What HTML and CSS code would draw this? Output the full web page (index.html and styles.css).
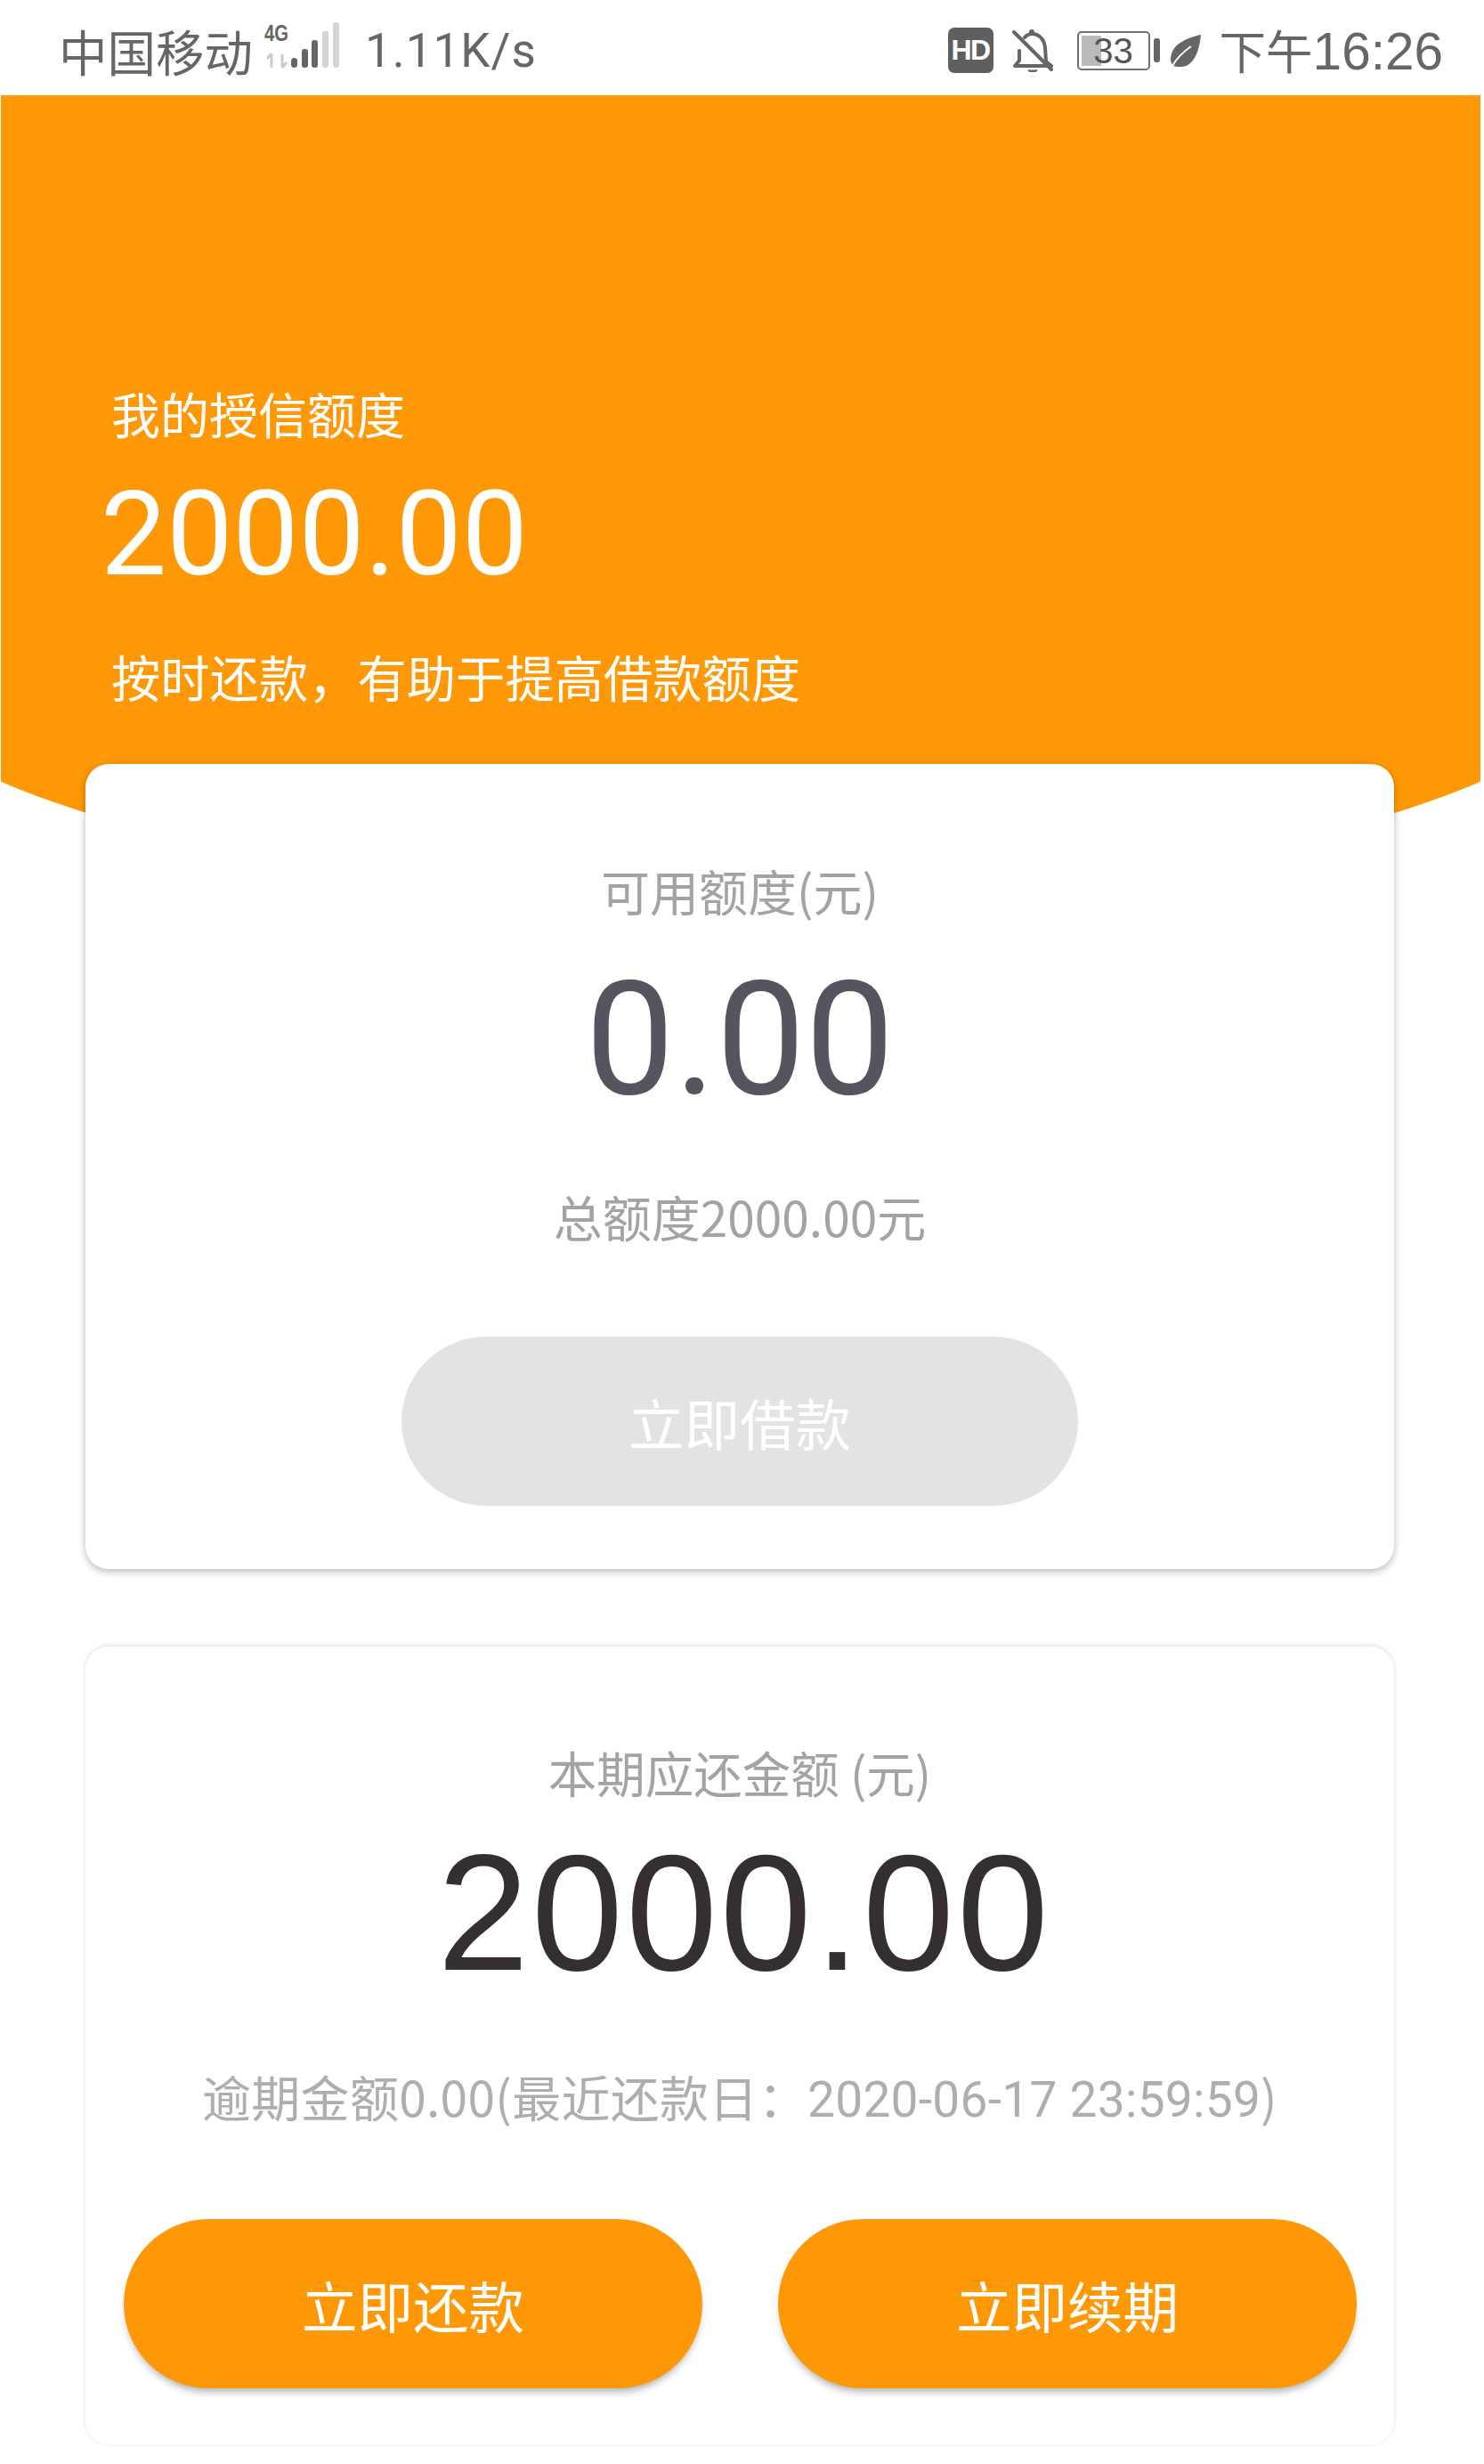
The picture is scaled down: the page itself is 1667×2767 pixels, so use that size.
FILE: index.html
```html
<!DOCTYPE html>
<html lang="zh-CN">
<head>
    <meta charset="UTF-8">
    <meta name="viewport" content="width=device-width, initial-scale=1.0">
    <title>我的授信额度</title>
    <link rel="stylesheet" href="styles.css">
</head>
<body>

    <div class="status-bar">
        <div class="status-left">
            <span class="carrier">中国移动</span>
            <svg class="signal" viewBox="0 -6 85 58" width="85" height="58">
                <text x="0" y="21" class="signal-4g" textLength="27" lengthAdjust="spacingAndGlyphs">4G</text>
                <path d="M8 35v16M3 41l5-6M20 51V36M20 51l5-6" class="signal-arrow"/>
                <rect x="30" y="40" width="7" height="11" rx="3.5" fill="#666"/>
                <rect x="42" y="30" width="7" height="21" rx="3" fill="#666"/>
                <rect x="53" y="20" width="7" height="31" rx="3" fill="#666"/>
                <rect x="65" y="10" width="7" height="41" rx="3" fill="#d4d4d4"/>
                <rect x="77" y="0" width="7" height="51" rx="3" fill="#d4d4d4"/>
            </svg>
            <span class="speed">1.11K/s</span>
        </div>
        <div class="status-right">
            <span class="hd">HD</span>
            <svg class="bell" viewBox="0 0 46 48" width="46" height="48">
                <path d="M14 9C17 6 20 5 22 5C31 5 36 12 37 20L38 36L44 41" fill="none" stroke="#666" stroke-width="4" stroke-linecap="round" stroke-linejoin="round"/>
                <path d="M8 24V35L3 41H38" fill="none" stroke="#666" stroke-width="4" stroke-linecap="round" stroke-linejoin="round"/>
                <circle cx="22" cy="3" r="3" fill="#666"/>
                <path d="M18 45.500c1 2.500 9 2.500 10 0" fill="#666" stroke="#666" stroke-width="2"/>
                <path d="M2 3L44 45" stroke="#666" stroke-width="4" stroke-linecap="round"/>
            </svg>
            <div class="battery">
                <div class="battery-body">
                    <div class="battery-fill"></div>
                    <span class="battery-num">33</span>
                </div>
                <div class="battery-nub"></div>
            </div>
            <svg class="leaf" viewBox="0 0 35 36" width="35" height="36">
                <path d="M35 0C22 3 2 9 1 27c0 3 1 6 3 8C20 40 32 30 35 0z" fill="#666"/>
                <path d="M3 35C8 26 14 20 24 13" fill="none" stroke="#fff" stroke-width="2"/>
            </svg>
            <span class="clock">下午<span class="clock-num">16:26</span></span>
        </div>
    </div>

    <div class="hero">
        <p class="hero-title">我的授信额度</p>
        <p class="hero-amount">2000.00</p>
        <p class="hero-tip">按时还款，有助于提高借款额度</p>
    </div>

    <div class="card card-credit">
        <p class="card-label">可用额度(元)</p>
        <p class="available">0.00</p>
        <p class="total">总额度2000.00元</p>
        <button class="btn btn-disabled" type="button">立即借款</button>
    </div>

    <div class="card card-repay">
        <p class="card-label card-label-small">本期应还金额 (元)</p>
        <p class="due">2000.00</p>
        <p class="overdue">逾期金额0.00(最近还款日：<span class="overdue-date">2020-06-17 23:59:59</span>)</p>
        <div class="button-row">
            <button class="btn btn-orange" type="button">立即还款</button>
            <button class="btn btn-orange" type="button">立即续期</button>
        </div>
    </div>

</body>
</html>
```

FILE: styles.css
```css
* {
    box-sizing: border-box;
}

html, body {
    height: 2767px;
    overflow: hidden;
}

body {
    margin: 0;
    background-color: #fff;
    font-family: "Noto Sans CJK SC", "Noto Sans", sans-serif;
}

p {
    margin: 0;
}

.status-bar {
    display: flex;
    justify-content: space-between;
    align-items: center;
    height: 107px;
    padding: 6px 46px 0 66px;
    color: #666;
}

.status-left, .status-right {
    display: flex;
    align-items: center;
}

.carrier {
    font-size: 54.500px;
    line-height: 60px;
}

.signal {
    margin: -17px 0 0 13px;
}

.signal-4g {
    font-family: "Liberation Sans", sans-serif;
    font-size: 25px;
    font-weight: bold;
    fill: #666;
}

.signal-arrow {
    fill: none;
    stroke: #ccc;
    stroke-width: 3;
}

.speed {
    margin-left: 28px;
    font-family: Roboto, sans-serif;
    font-size: 53px;
    letter-spacing: 1px;
}

.hd {
    width: 51px;
    height: 51px;
    margin-left: 2px;
    border-radius: 7px;
    background-color: #5f5f5f;
    color: #fff;
    font-family: "Liberation Sans", sans-serif;
    font-size: 32px;
    font-weight: bold;
    line-height: 51px;
    letter-spacing: -1.500px;
    text-align: center;
}

.bell {
    margin-left: 21px;
}

.battery {
    display: flex;
    align-items: center;
    margin-left: 27px;
}

.battery-body {
    position: relative;
    width: 82px;
    height: 44px;
    border: 2px solid #707070;
    border-radius: 5px;
    background-color: #fff;
    padding: 3px;
}

.battery-fill {
    width: 22px;
    height: 100%;
    background-color: #bbb;
}

.battery-num {
    position: absolute;
    inset: 0;
    font-family: "Liberation Sans", sans-serif;
    font-size: 40px;
    line-height: 40px;
    text-align: center;
    color: #555;
}

.battery-nub {
    width: 7px;
    height: 27px;
    margin-left: 4px;
    border-radius: 3px;
    background-color: #666;
}

.leaf {
    margin-left: 11px;
}

.clock {
    margin-left: 21px;
    font-size: 52.500px;
    line-height: 60px;
}

.clock-num {
    font-family: "Liberation Sans", sans-serif;
    font-size: 58.500px;
}

/* the curve is much wider than the page, only its middle shows */
.hero {
    position: relative;
    isolation: isolate;
    width: 1662px;
    height: 899px;
    margin-left: 1px;
    padding: 324px 0 0 124px;
    overflow: hidden;
    color: #fff;
}

.hero::before {
    content: "";
    position: absolute;
    z-index: -1;
    top: 0;
    left: -169px;
    width: 2000px;
    height: 100%;
    background-color: #ff9806;
    border-radius: 0 0 1000px 1000px / 0 0 289px 289px;
}

.hero-title {
    font-size: 55px;
    line-height: 64px;
}

.hero-amount {
    margin: 30px 0 0 -12px;
    font-family: Roboto, sans-serif;
    font-size: 132px;
    line-height: 150px;
}

.hero-tip {
    margin-top: 52px;
    font-size: 55.300px;
    line-height: 64px;
}

.card {
    width: 1470px;
    margin: 0 0 0 96px;
    background-color: #fff;
    border-radius: 26px;
    text-align: center;
}

.card-credit {
    position: relative;
    height: 904px;
    margin-top: -148px;
    padding-top: 109px;
    box-shadow: 0 3px 8px rgba(0, 0, 0, 0.28);
}

.card-repay {
    height: 896px;
    margin-top: 87px;
    padding-top: 109px;
    box-shadow: 0 -1px 5px rgba(0, 0, 0, 0.14);
}

.card-label {
    font-size: 55px;
    line-height: 64px;
    color: #a3a3a3;
}

.card-label-small {
    font-size: 54.500px;
}

.available {
    margin-top: 41px;
    font-family: Roboto, sans-serif;
    font-size: 178px;
    line-height: 190px;
    color: #55545f;
}

.total {
    margin-top: 71px;
    font-size: 55px;
    line-height: 64px;
    color: #a3a3a3;
}

.btn {
    display: block;
    height: 190px;
    border: 0;
    border-radius: 95px;
    font-family: inherit;
    font-size: 62.500px;
    color: #fff;
}

.btn-disabled {
    width: 760px;
    margin: 104px auto 0;
    background-color: #e3e3e3;
}

.btn-orange {
    width: 650px;
    background-color: #ff9806;
    box-shadow: 0 7px 8px -3px rgba(0, 0, 0, 0.3);
}

.due {
    margin: 21px 0 0 10px;
    font-family: "Liberation Sans", sans-serif;
    font-size: 185px;
    line-height: 210px;
    letter-spacing: 3px;
    color: #352f2f;
}

.overdue {
    margin-top: 68px;
    font-size: 55px;
    line-height: 64px;
    letter-spacing: 0.300px;
    color: #aeaeae;
}

.overdue-date {
    font-family: Roboto, sans-serif;
}

.button-row {
    display: flex;
    justify-content: space-between;
    margin: 102px 42px 0 43px;
}
```
